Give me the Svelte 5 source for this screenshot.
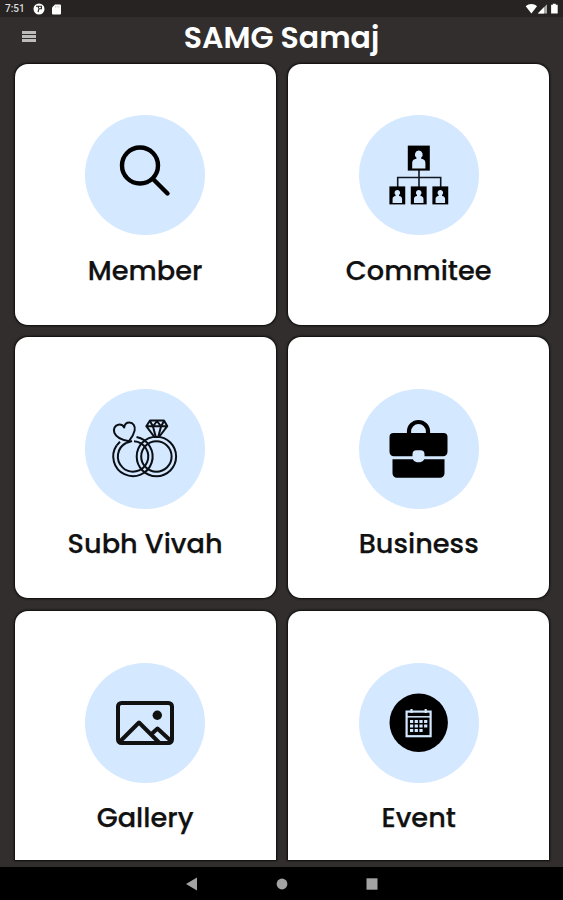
<script lang="ts">
  type MenuItem = { id: string; label: string };

  const items: MenuItem[] = [
    { id: 'member', label: 'Member' },
    { id: 'committee', label: 'Commitee' },
    { id: 'vivah', label: 'Subh Vivah' },
    { id: 'business', label: 'Business' },
    { id: 'gallery', label: 'Gallery' },
    { id: 'event', label: 'Event' }
  ];
</script>

{#snippet person(x: number, y: number, scale: number)}
  <g transform="translate({x} {y}) scale({scale})">
    <rect width="22" height="25" fill="#000" />
    <path
      d="M11 5a3.8 3.8 0 0 1 2.4 6.8v1.4c2.8.3 4.2 1.7 4.2 4.2V23H4.4v-5.6c0-2.5 1.4-3.9 4.2-4.2v-1.4A3.8 3.8 0 0 1 11 5z"
      fill="#d4e8ff"
    />
  </g>
{/snippet}

<div class="screen">
  <div class="status-bar">
    <div class="status-left">
      <span class="time">7:51</span>
      <svg width="12" height="12" viewBox="0 0 12 12">
        <circle cx="6" cy="6" r="5.5" fill="#fff" />
        <path d="M3 3.2h2.4v2M5.4 3.2h3v2.6H6L5 9" fill="none" stroke="#262322" stroke-width="1.1" />
      </svg>
      <svg width="9" height="11" viewBox="0 0 9 11">
        <path d="M3 .5h5a1 1 0 0 1 1 1v8a1 1 0 0 1-1 1H1a1 1 0 0 1-1-1v-6z" fill="#fff" />
        <path d="M3.5 2v1.5M5.2 2v1.5M6.9 2v1.5" stroke="#aaa" stroke-width=".7" />
      </svg>
    </div>
    <svg width="34" height="12" viewBox="0 0 34 12">
      <path d="M.7 3.2C3.9.4 8.8.4 12 3.2L6.4 10.4z" fill="#fff" />
      <path d="M22 1.2v9.2h-9.2z" fill="#aaa" />
      <path d="M19 4.2v6.2h-6.2z" fill="#fff" />
      <path d="M27.8 .8h3v1h1.9v8.8h-6.6V1.8h1.7z" fill="#fff" />
    </svg>
  </div>

  <header class="app-bar">
    <button class="menu-button" aria-label="Menu">
      <span></span>
      <span></span>
      <span></span>
    </button>
    <h1>SAMG Samaj</h1>
  </header>

  <main class="menu-grid">
    {#each items as item (item.id)}
      <div class="card">
        <div class="icon">
          <svg width="120" height="120" viewBox="0 0 120 120">
            {#if item.id === 'member'}
              <g fill="none" stroke="#000" stroke-width="4.4" stroke-linecap="round">
                <circle cx="55" cy="50.5" r="18" />
                <path d="M68 64l14.5 14.5" />
              </g>
            {:else if item.id === 'committee'}
              <path
                d="M60 55v17M38.7 72v-9.5h43V72"
                fill="none"
                stroke="#111820"
                stroke-width="1.6"
              />
              {@render person(48.8, 30.6, 1)}
              {@render person(30.4, 71.4, 0.72)}
              {@render person(51.8, 71.4, 0.72)}
              {@render person(73.4, 71.4, 0.72)}
            {:else if item.id === 'vivah'}
              <g fill="none" stroke="#0b0f14" stroke-width="2" stroke-linejoin="round">
                <path d="M51.5 48.1A19.7 19.7 0 1 1 31.5 56.6" />
                <path d="M49 52.3A15.2 15.2 0 1 1 41 54" />
                <path d="M31.5 56.6l3.5-3.8M41 54l6-2" />
                <circle cx="71.4" cy="67.5" r="19.7" />
                <circle cx="71.4" cy="67.5" r="15.2" />
                <path
                  d="M44 52.2c-6.5-1.2-12.9-4-14.6-8.4-1.5-4 .6-7.6 4-8.1 2.6-.4 4.6.7 5.8 2.7.4-2.8 2.4-4.8 5.1-4.8 4 0 6.3 3.6 5.3 8-.9 4-3 7.4-5.6 10.6z"
                />
                <path d="M65 31.5h14l3.3 5.7L74 48h-4.6l-8.1-10.8zM61.3 37.3h21" />
                <path d="M65 32l3 5.5 4-5.5 4 5.5 3-5.5M68 37.5l2.5 9.5M76 37.5L73.5 47" />
              </g>
            {:else if item.id === 'business'}
              <path
                d="M50 47v-4.5a9.5 9.5 0 0 1 19 0V47"
                fill="none"
                stroke="#000"
                stroke-width="4.2"
              />
              <path
                d="M34.5 44h50a4 4 0 0 1 4 4v14.5c0 3-1.7 4.7-4.5 4.7H65.5v-2a4 4 0 0 0-4-4h-4a4 4 0 0 0-4 4v2H35c-2.8 0-4.5-1.7-4.5-4.7V48a4 4 0 0 1 4-4z"
              />
              <path
                d="M33.5 70.2h20.3a4.5 4.5 0 0 0 4 3h3.4a4.5 4.5 0 0 0 4-3h20.3v14a4.5 4.5 0 0 1-4.5 4.5H38a4.5 4.5 0 0 1-4.5-4.5z"
              />
            {:else if item.id === 'gallery'}
              <g fill="none" stroke="#111" stroke-width="4" stroke-linejoin="round">
                <rect x="33" y="40" width="54" height="40" rx="3.5" />
                <path d="M35 78.5l19-19L74 79.5M66.5 71l6-5.5L86 78" />
              </g>
              <circle cx="72.3" cy="52.3" r="4.7" fill="#111" />
            {:else}
              <circle cx="59.7" cy="59.7" r="29.2" fill="#000" />
              <g fill="none" stroke="#d4e8ff">
                <rect x="47.6" y="48.6" width="24" height="24.6" stroke-width="2.2" />
                <path d="M48 53.8h24" stroke-width="1.5" />
                <path d="M52.5 46v4M66.7 46v4" stroke-width="2.2" />
                <path
                  d="M51 58.4h17.6M51 63h17.6M51 67.6h13.2"
                  stroke-width="3"
                  stroke-dasharray="3.2 1.5"
                />
              </g>
            {/if}
          </svg>
        </div>
        <h2>{item.label}</h2>
      </div>
    {/each}
  </main>

  <nav class="nav-bar">
    <svg width="12" height="14" viewBox="0 0 12 14"><path d="M11 .5v13L0 7z" /></svg>
    <svg width="12" height="14" viewBox="0 0 12 14"><circle cx="6" cy="7" r="5.4" /></svg>
    <svg width="12" height="14" viewBox="0 0 12 14"><rect x=".5" y="1.3" width="11" height="11.4" /></svg>
  </nav>
</div>

<style>
  :global(body) {
    margin: 0;
    background: #312e2d;
  }

  .screen {
    display: flex;
    flex-direction: column;
    width: 563px;
    height: 900px;
    overflow: hidden;
    background: #312e2d;
    font-family: Poppins, Inter, sans-serif;
  }

  svg {
    display: block;
  }

  .status-bar {
    display: flex;
    flex: none;
    align-items: center;
    justify-content: space-between;
    box-sizing: border-box;
    height: 17px;
    padding: 1px 4px 0 5px;
    background: #262322;
  }

  .status-left {
    display: flex;
    align-items: center;
    gap: 7px;
  }

  .time {
    width: 21px;
    color: #ddd;
    font-family: Roboto, sans-serif;
    font-size: 10px;
    font-weight: 500;
    line-height: 14px;
  }

  .app-bar {
    display: grid;
    flex: none;
    grid-template-columns: 60px 1fr 60px;
    align-items: center;
    height: 46.6px;
  }

  .menu-button {
    display: flex;
    flex-direction: column;
    gap: 1px;
    width: 14px;
    margin: -7px 0 0 22px;
    padding: 0;
    border: 0;
    background: none;
  }

  .menu-button span {
    height: 3px;
    background: #bdbcbb;
  }

  h1 {
    margin: -5px 0 0;
    color: #fff;
    font-size: 30px;
    font-weight: 600;
    line-height: 40px;
    text-align: center;
    white-space: nowrap;
  }

  .menu-grid {
    display: grid;
    flex: none;
    grid-template-columns: 261px 261px;
    grid-template-rows: 261px 261px 249.4px;
    gap: 12.7px 12.6px;
    padding: 0 0 6.8px 14.6px;
  }

  .card {
    display: flex;
    flex-direction: column;
    align-items: center;
    border-radius: 13px;
    background: #fff;
    box-shadow: 0 0 2px 1px #0d0c0b;
  }

  /* the last row runs into the bottom edge of the list */
  .card:nth-last-child(-n + 2) {
    border-bottom-right-radius: 0;
    border-bottom-left-radius: 0;
  }

  .icon {
    width: 120px;
    height: 120px;
    margin-top: 51.8px;
    border-radius: 50%;
    background: #d4e8ff;
  }

  h2 {
    margin: 17.2px 0 0;
    color: #111;
    font-size: 27.2px;
    font-weight: 500;
    line-height: 36px;
    white-space: nowrap;
    -webkit-text-stroke: 0.25px #111;
  }

  .nav-bar {
    display: flex;
    flex: 1;
    align-items: center;
    justify-content: center;
    gap: 78px;
    background: #000;
  }

  .nav-bar svg {
    fill: #a3a3a3;
  }
</style>
